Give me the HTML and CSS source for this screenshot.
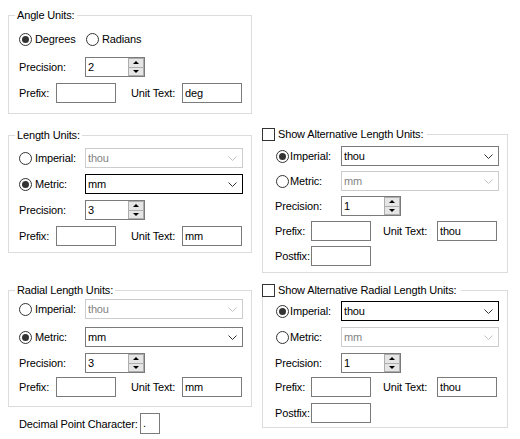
FILE: index.html
```html
<!DOCTYPE html>
<html>
<head>
<meta charset="utf-8">
<title>Units</title>
<link rel="stylesheet" href="styles.css">
</head>
<body>
<div class="dialog">
  <div class="col col-left">
    <fieldset class="group g-angle">
      <legend>Angle Units:</legend>
      <div class="body">
        <div class="row">
          <label class="radio checked w-deg"><span class="dot"></span>Degrees</label>
          <label class="radio"><span class="dot"></span>Radians</label>
        </div>
        <div class="row">
          <span class="lbl w-opt">Precision:</span>
          <div class="spin"><span class="val">2</span><span class="btns"><span class="up"></span><span class="dn"></span></span></div>
        </div>
        <div class="row">
          <span class="lbl w-pre">Prefix:</span><span class="input"></span>
          <span class="lbl w-unit">Unit Text:</span><span class="input">deg</span>
        </div>
      </div>
    </fieldset>

    <fieldset class="group g-length">
      <legend>Length Units:</legend>
      <div class="body">
        <div class="row">
          <label class="radio w-opt"><span class="dot"></span>Imperial:</label>
          <div class="combo disabled"><span class="val">thou</span><svg class="chev" width="9" height="5" viewBox="0 0 9 5"><path d="M0.5 0.5 L4.5 4.5 L8.5 0.5" fill="none" stroke="currentColor"/></svg></div>
        </div>
        <div class="row">
          <label class="radio checked w-opt"><span class="dot"></span>Metric:</label>
          <div class="combo focus"><span class="val">mm</span><svg class="chev" width="9" height="5" viewBox="0 0 9 5"><path d="M0.5 0.5 L4.5 4.5 L8.5 0.5" fill="none" stroke="currentColor"/></svg></div>
        </div>
        <div class="row">
          <span class="lbl w-opt">Precision:</span>
          <div class="spin"><span class="val">3</span><span class="btns"><span class="up"></span><span class="dn"></span></span></div>
        </div>
        <div class="row">
          <span class="lbl w-pre">Prefix:</span><span class="input"></span>
          <span class="lbl w-unit">Unit Text:</span><span class="input">mm</span>
        </div>
      </div>
    </fieldset>

    <fieldset class="group g-radial">
      <legend>Radial Length Units:</legend>
      <div class="body">
        <div class="row">
          <label class="radio w-opt"><span class="dot"></span>Imperial:</label>
          <div class="combo disabled"><span class="val">thou</span><svg class="chev" width="9" height="5" viewBox="0 0 9 5"><path d="M0.5 0.5 L4.5 4.5 L8.5 0.5" fill="none" stroke="currentColor"/></svg></div>
        </div>
        <div class="row">
          <label class="radio checked w-opt"><span class="dot"></span>Metric:</label>
          <div class="combo"><span class="val">mm</span><svg class="chev" width="9" height="5" viewBox="0 0 9 5"><path d="M0.5 0.5 L4.5 4.5 L8.5 0.5" fill="none" stroke="currentColor"/></svg></div>
        </div>
        <div class="row">
          <span class="lbl w-opt">Precision:</span>
          <div class="spin"><span class="val">3</span><span class="btns"><span class="up"></span><span class="dn"></span></span></div>
        </div>
        <div class="row">
          <span class="lbl w-pre">Prefix:</span><span class="input"></span>
          <span class="lbl w-unit">Unit Text:</span><span class="input">mm</span>
        </div>
      </div>
    </fieldset>

    <div class="decimal">
      <span class="lbl w-dec">Decimal Point Character:</span><span class="input small">.</span>
    </div>
  </div>

  <div class="col col-right">
    <fieldset class="group alt g-alt-length">
      <legend class="chk"><span class="box"></span>Show Alternative Length Units:</legend>
      <div class="body">
        <div class="row">
          <label class="radio checked w-opt"><span class="dot"></span>Imperial:</label>
          <div class="combo"><span class="val">thou</span><svg class="chev" width="9" height="5" viewBox="0 0 9 5"><path d="M0.5 0.5 L4.5 4.5 L8.5 0.5" fill="none" stroke="currentColor"/></svg></div>
        </div>
        <div class="row">
          <label class="radio w-opt"><span class="dot"></span>Metric:</label>
          <div class="combo disabled"><span class="val">mm</span><svg class="chev" width="9" height="5" viewBox="0 0 9 5"><path d="M0.5 0.5 L4.5 4.5 L8.5 0.5" fill="none" stroke="currentColor"/></svg></div>
        </div>
        <div class="row">
          <span class="lbl w-opt">Precision:</span>
          <div class="spin"><span class="val">1</span><span class="btns"><span class="up"></span><span class="dn"></span></span></div>
        </div>
        <div class="row">
          <span class="lbl w-pre">Prefix:</span><span class="input"></span>
          <span class="lbl w-unit">Unit Text:</span><span class="input">thou</span>
        </div>
        <div class="row">
          <span class="lbl w-pre">Postfix:</span><span class="input"></span>
        </div>
      </div>
    </fieldset>

    <fieldset class="group alt g-alt-radial">
      <legend class="chk"><span class="box"></span>Show Alternative Radial Length Units:</legend>
      <div class="body">
        <div class="row">
          <label class="radio checked w-opt"><span class="dot"></span>Imperial:</label>
          <div class="combo focus"><span class="val">thou</span><svg class="chev" width="9" height="5" viewBox="0 0 9 5"><path d="M0.5 0.5 L4.5 4.5 L8.5 0.5" fill="none" stroke="currentColor"/></svg></div>
        </div>
        <div class="row">
          <label class="radio w-opt"><span class="dot"></span>Metric:</label>
          <div class="combo disabled"><span class="val">mm</span><svg class="chev" width="9" height="5" viewBox="0 0 9 5"><path d="M0.5 0.5 L4.5 4.5 L8.5 0.5" fill="none" stroke="currentColor"/></svg></div>
        </div>
        <div class="row">
          <span class="lbl w-opt">Precision:</span>
          <div class="spin"><span class="val">1</span><span class="btns"><span class="up"></span><span class="dn"></span></span></div>
        </div>
        <div class="row">
          <span class="lbl w-pre">Prefix:</span><span class="input"></span>
          <span class="lbl w-unit">Unit Text:</span><span class="input">thou</span>
        </div>
        <div class="row">
          <span class="lbl w-pre">Postfix:</span><span class="input"></span>
        </div>
      </div>
    </fieldset>
  </div>
</div>
</body>
</html>
```

FILE: styles.css
```css
* { box-sizing: border-box; }
html, body { margin: 0; padding: 0; background: #ffffff; }
body {
  width: 520px;
  height: 439px;
  overflow: hidden;
  font-family: "Liberation Sans", Arial, sans-serif;
  font-size: 11px;
  letter-spacing: -0.15px;
  color: #000000;
}

.dialog { display: flex; gap: 10px; padding: 9px 0 0 8px; }
.col { display: flex; flex-direction: column; }
.col-left { width: 244px; }
.col-right { width: 246px; padding-top: 119px; }

/* group boxes */
.group {
  margin: 0;
  padding: 0;
  min-width: 0;
  border: 1px solid #dcdcdc;
}
.group legend {
  margin-left: 6px;
  padding: 0 2px;
  height: 13px;
  line-height: 13px;
  white-space: nowrap;
}
.group legend.chk {
  margin-left: -1px;
  padding: 0 4px 0 0;
  display: flex;
  align-items: center;
}
.chk .box {
  width: 13px;
  height: 13px;
  border: 1px solid #333333;
  background: #ffffff;
  margin-right: 3px;
}

.body { display: flex; flex-direction: column; padding-left: 10px; }
.alt .body { padding-left: 12px; }
.row { display: flex; align-items: center; height: 20px; }

.g-angle .body { padding-top: 7px; padding-bottom: 10px; gap: 6px; }
.g-angle .body .row:first-child { margin-bottom: 2px; }

.g-length { margin-top: 15px; }
.g-length .body { padding-top: 6px; padding-bottom: 6px; gap: 6px; }

.g-radial { margin-top: 31px; }
.g-radial .body { padding-top: 2px; padding-bottom: 9px; gap: 6px; }
.g-radial .body .row:nth-child(1) { margin-bottom: 2px; }
.g-radial .body .row:nth-child(3) { margin-bottom: -2px; }

.g-alt-length .body { padding-top: 5px; padding-bottom: 6px; gap: 5px; }
.g-alt-radial { margin-top: 11px; }
.g-alt-radial .body { padding-top: 4px; padding-bottom: 4px; gap: 6px; }
.g-alt-radial .body .row:nth-child(3) { margin-bottom: -2px; }

/* labels */
.lbl { white-space: nowrap; flex: none; }
.w-opt { width: 66px; }
.w-deg { width: 67px; }
.w-pre { width: 37px; }
.w-unit { width: 51px; margin-left: 15px; }
.alt .w-pre { width: 36px; }
.alt .w-unit { width: 54px; margin-left: 12px; }
.w-dec { width: 121px; }

/* radio */
.radio { display: flex; align-items: center; flex: none; white-space: nowrap; }
.radio .dot {
  width: 13px;
  height: 13px;
  border: 1px solid #333333;
  border-radius: 50%;
  background: #ffffff;
  margin-right: 3px;
  display: flex;
  align-items: center;
  justify-content: center;
}
.alt .radio .dot { margin-left: 1px; margin-right: 1px; }
.radio.checked .dot::after {
  content: "";
  width: 7px;
  height: 7px;
  border-radius: 50%;
  background: #333333;
}

/* text inputs */
.input {
  flex: none;
  width: 60px;
  height: 20px;
  border: 1px solid #7a7a7a;
  background: #ffffff;
  padding-left: 2px;
  line-height: 18px;
}
.input.small { width: 20px; height: 21px; line-height: 19px; }

.decimal { display: flex; align-items: center; margin-top: 6px; padding-left: 11px; height: 21px; }

/* combo */
.combo {
  flex: none;
  width: 158px;
  height: 20px;
  border: 1px solid #7a7a7a;
  background: #ffffff;
  display: flex;
  align-items: center;
  padding: 0 5px 0 2px;
}
.combo .val { flex: 1; }
.combo .chev { color: #333333; display: block; }
.combo.focus { border-color: #000000; }
.combo.disabled { border-color: #cccccc; color: #838383; }
.combo.disabled .chev { color: #c2c2c2; }

/* numeric spin */
.spin {
  flex: none;
  width: 60px;
  height: 20px;
  border: 1px solid #7a7a7a;
  background: #ffffff;
  display: flex;
  align-items: stretch;
}
.spin .val { flex: 1; padding-left: 2px; line-height: 18px; }
.spin .btns { width: 16px; display: flex; flex-direction: column; }
.spin .btns span {
  flex: 1;
  background: #e5e5e5;
  border: 1px solid #adadad;
  display: flex;
  align-items: center;
  justify-content: center;
}
.spin .btns span + span { border-top: none; }
.spin .up::after {
  content: "";
  border-left: 3px solid transparent;
  border-right: 3px solid transparent;
  border-bottom: 3px solid #000000;
}
.spin .dn::after {
  content: "";
  border-left: 3px solid transparent;
  border-right: 3px solid transparent;
  border-top: 3px solid #000000;
}
```
